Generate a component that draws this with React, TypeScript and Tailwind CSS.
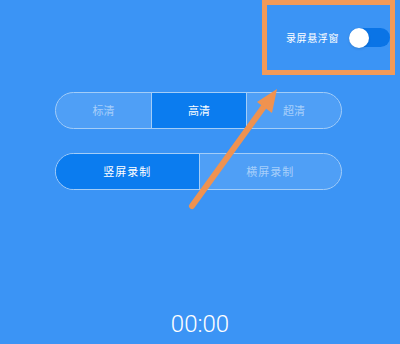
import { useState } from "react";

const QUALITIES = ["标清", "高清", "超清"];
const MODES = ["竖屏录制", "横屏录制"];

const cjk = { fontFamily: '"Noto Sans CJK SC", "Noto Sans", sans-serif' };

export default function App() {
  const [quality, setQuality] = useState(1);
  const [mode, setMode] = useState(0);
  const [floating, setFloating] = useState(true);

  return (
    <div
      className="relative flex h-[344px] w-[400px] flex-col overflow-hidden bg-[#3b94f5]"
      style={cjk}
    >
      {/* floating window toggle (with orange annotation frame) */}
      <div className="flex justify-end pr-[5px]">
        <div className="flex h-[75px] w-[133px] items-center justify-end gap-[10px] border-[5px] border-[#f29a58]">
          <span className="text-[10px] leading-none tracking-[0.6px] text-white">录屏悬浮窗</span>
          <button
            onClick={() => setFloating(!floating)}
            className={`relative flex h-[19px] w-[41px] items-center rounded-full ${
              floating ? "bg-[#0a74e6]" : "bg-white/30"
            }`}
          >
            <span
              className={`absolute h-[20px] w-[20px] rounded-full bg-white shadow-sm ${
                floating ? "left-0" : "right-0"
              }`}
            />
          </button>
        </div>
      </div>

      {/* quality */}
      <div className="ml-[55px] mt-[17px] grid h-[37px] w-[287px] grid-cols-3 overflow-hidden rounded-full border border-[#a3cdf8]">
        {QUALITIES.map((q, i) => (
          <button
            key={q}
            onClick={() => setQuality(i)}
            className={`flex items-center justify-center text-[11px] ${
              i > 0 ? "border-l border-[#a3cdf8]" : ""
            } ${quality === i ? "bg-[#0b7cef] text-white" : "bg-white/10 text-white/50"}`}
          >
            {q}
          </button>
        ))}
      </div>

      {/* orientation */}
      <div className="ml-[55px] mt-[24px] grid h-[37px] w-[287px] grid-cols-2 overflow-hidden rounded-full border border-[#a3cdf8]">
        {MODES.map((m, i) => (
          <button
            key={m}
            onClick={() => setMode(i)}
            className={`flex items-center justify-center text-[11px] tracking-[1px] ${
              i > 0 ? "border-l border-[#a3cdf8]" : ""
            } ${mode === i ? "bg-[#0b7cef] text-white" : "bg-white/10 text-white/50"}`}
          >
            {m}
          </button>
        ))}
      </div>

      {/* timer */}
      <div className="mt-auto pb-[6px] text-center font-['Roboto'] text-[24px] font-light leading-[28px] text-white">
        00:00
      </div>

      {/* annotation arrow */}
      <svg className="pointer-events-none absolute left-0 top-0" width="400" height="344">
        <line x1="192" y1="206" x2="268" y2="101" stroke="#ef9250" strokeWidth="6" strokeLinecap="round" />
        <polygon points="277,89 257,102 272,113" fill="#ef9250" />
      </svg>
    </div>
  );
}
